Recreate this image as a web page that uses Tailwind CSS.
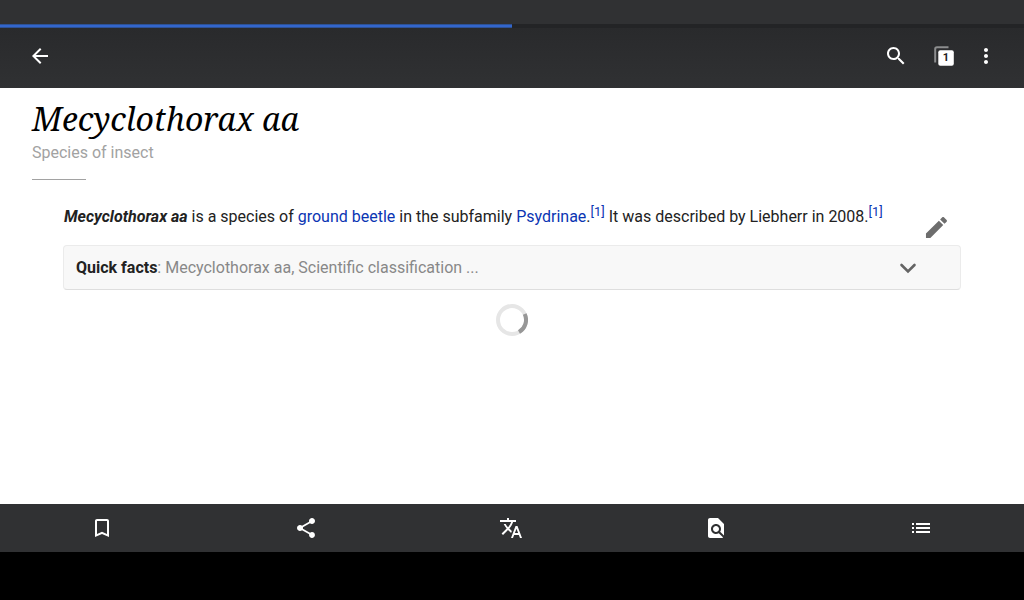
<!DOCTYPE html>
<html lang="en">
<head>
<meta charset="utf-8">
<meta name="viewport" content="width=device-width, initial-scale=1">
<title>Mecyclothorax aa</title>
<script src="https://cdn.jsdelivr.net/npm/@tailwindcss/browser@4"></script>
</head>
<body class="flex min-h-screen flex-col bg-black font-['Roboto',sans-serif] text-base text-[#222222]">
<header class="bg-[#303133] text-white">
  <div class="h-6"></div>
  <div role="progressbar" aria-label="Loading article" aria-valuenow="50" aria-valuemin="0" aria-valuemax="100" class="h-1 bg-[#232426]">
    <div class="h-full border-y border-[#2e5295] bg-[#3366cc]" style="width:50%"></div>
  </div>
  <div class="flex h-15 items-center bg-linear-to-b from-[#292a2c] to-[#303133] pr-[26px] pb-1 pl-7">
    <button type="button" aria-label="Back" class="mr-auto"><svg class="size-6" viewBox="0 0 24 24" fill="currentColor"><path d="M20 11H7.83l5.59-5.59L12 4l-8 8 8 8 1.41-1.41L7.83 13H20v-2z"/></svg></button>
    <button type="button" aria-label="Search" class="mr-6"><svg class="size-6" viewBox="0 0 24 24" fill="currentColor"><path d="M15.5 14h-.79l-.28-.27C15.41 12.59 16 11.11 16 9.5 16 5.91 13.09 3 9.5 3S3 5.91 3 9.5 5.91 16 9.5 16c1.61 0 3.09-.59 4.23-1.57l.27.28v.79l5 4.99L20.49 19l-4.99-5zm-6 0C7.01 14 5 11.99 5 9.5S7.01 5 9.5 5 14 7.01 14 9.5 11.99 14 9.5 14z"/></svg></button>
    <button type="button" aria-label="Tabs, 1 open" class="relative mr-[18px] size-6">
      <svg class="size-6" viewBox="0 0 24 24" fill="none"><path d="M3.200 18.500V5Q3.200 3.200 5 3.200H16.500" stroke="#8c8d8e" stroke-width="2"/><rect x="6.300" y="6.300" width="15.500" height="15.500" rx="2" fill="#fff"/></svg>
      <span class="absolute top-1.5 left-1.5 size-4 text-center text-[11px] leading-4 font-bold text-[#222222]">1</span>
    </button>
    <button type="button" aria-label="More options"><svg class="size-6" viewBox="0 0 24 24" fill="currentColor"><path d="M12 8c1.1 0 2-.9 2-2s-.9-2-2-2-2 .9-2 2 .9 2 2 2zm0 2c-1.1 0-2 .9-2 2s.9 2 2 2 2-.9 2-2-.9-2-2-2zm0 6c-1.1 0-2 .9-2 2s.9 2 2 2 2-.9 2-2-.9-2-2-2z"/></svg></button>
  </div>
</header>
<main class="flex-1 bg-white px-8 pt-2">
  <h1 class="font-['Noto_Serif','Liberation_Serif',serif] text-[32px] leading-[45px] text-black italic">Mecyclothorax aa</h1>
  <p class="leading-6 text-[#a2a2a2]">Species of insect</p>
  <hr class="mt-3.5 w-[54px] border-[#a2a2a2]">
  <div class="mt-[25px] flex px-8">
    <p class="flex-1 leading-6"><b class="italic">Mecyclothorax aa</b> is a species of <a href="#beetle" class="text-[#0b35b3]">ground beetle</a> in the subfamily <a href="#psydrinae" class="text-[#0b35b3]">Psydrinae</a>.<sup class="text-[13px]"><a href="#ref1" class="text-[#0b35b3]">[1]</a></sup> It was described by Liebherr in 2008.<sup class="text-[13px]"><a href="#ref1" class="text-[#0b35b3]">[1]</a></sup></p>
    <button type="button" aria-label="Edit" class="mt-2 mr-2.5 self-start text-[#6d6d6d]"><svg class="size-7" viewBox="0 0 24 24" fill="currentColor"><path d="M3.400 17.650V21.400h3.750L18.210 10.340l-3.750-3.750L3.400 17.650zM21.110 7.440c.39-.39.39-1.020 0-1.410l-2.340-2.340c-.39-.39-1.020-.39-1.410 0l-1.830 1.830 3.750 3.750 1.830-1.830z"/></svg></button>
  </div>
  <button type="button" id="facts" class="mx-[31px] mt-1 flex h-[45px] w-[calc(100%-62px)] items-center rounded-sm border border-[#ebebeb] border-b-[#dedede] bg-[#f8f8f8] pr-10 pl-3 text-left text-[#888888]">
    <span class="flex-1"><b class="text-[#222222]">Quick facts</b>: Mecyclothorax aa, Scientific classification ...</span>
    <svg class="size-6" viewBox="0 0 24 24" fill="none" stroke="#646464" stroke-width="2.600" stroke-linecap="round"><path d="m5.500 9 6.500 6.500L18.500 9"/></svg>
  </button>
  <svg role="img" aria-label="Loading" class="mx-auto mt-3.5 size-8" viewBox="0 0 32 32" fill="none" stroke-width="4"><circle cx="16" cy="16" r="14" stroke="#e6e6e6"/><path d="M28.700 10a14 14 0 0 1-5.700 18.100" stroke="#979797"/></svg>
</main>
<nav aria-label="Article tools" class="mb-12 grid h-12 grid-cols-5 bg-[#303133] text-white">
  <button type="button" aria-label="Save" class="flex items-center justify-center"><svg class="size-6" viewBox="0 0 24 24" fill="currentColor"><path d="M17 3H7c-1.100 0-1.990.9-1.990 2L5 21l7-3 7 3V5c0-1.100-.9-2-2-2zm0 15l-5-2.180L7 18V5h10v13z"/></svg></button>
  <button type="button" aria-label="Share" class="flex items-center justify-center pr-0.5"><svg class="size-6" viewBox="0 0 24 24" fill="currentColor"><path d="M18 16.080c-.76 0-1.440.3-1.960.77L8.910 12.700c.05-.23.09-.46.09-.7s-.04-.47-.09-.7l7.050-4.110c.54.5 1.250.81 2.040.81 1.660 0 3-1.340 3-3s-1.340-3-3-3-3 1.340-3 3c0 .24.04.47.09.7L8.040 9.810C7.500 9.310 6.790 9 6 9c-1.660 0-3 1.340-3 3s1.340 3 3 3c.79 0 1.500-.31 2.040-.81l7.120 4.160c-.05.21-.08.43-.08.65 0 1.610 1.310 2.920 2.920 2.920s2.920-1.310 2.920-2.920-1.310-2.920-2.920-2.920z"/></svg></button>
  <button type="button" aria-label="Language" class="flex items-center justify-center pr-0.5"><svg class="size-6" viewBox="0 0 24 24" fill="currentColor"><path d="M12.870 15.070l-2.540-2.510.03-.03c1.740-1.940 2.980-4.170 3.710-6.530H17V4h-7V2H8v2H1v1.990h11.170C11.500 7.920 10.440 9.750 9 11.350 8.070 10.320 7.300 9.190 6.690 8h-2c.73 1.630 1.730 3.170 2.980 4.560l-5.090 5.020L4 19l5-5 3.110 3.110.76-2.040zM18.500 10h-2L12 22h2l1.120-3h4.750L21 22h2l-4.500-12zm-2.620 7l1.620-4.330L19.120 17h-3.240z"/></svg></button>
  <button type="button" aria-label="Find in article" class="flex items-center justify-center pr-0.5"><svg class="size-6" viewBox="0 0 24 24" fill="currentColor"><path d="M20 19.590V8l-6-6H6c-1.100 0-1.990.9-1.990 2L4 20c0 1.100.89 2 1.990 2H18c.45 0 .85-.15 1.190-.4l-4.430-4.430c-.8.52-1.740.83-2.760.83-2.760 0-5-2.240-5-5s2.240-5 5-5 5 2.240 5 5c0 1.020-.31 1.960-.83 2.750L20 19.590zM9 13c0 1.660 1.340 3 3 3s3-1.340 3-3-1.340-3-3-3-3 1.340-3 3z"/></svg></button>
  <button type="button" aria-label="Contents" class="flex items-center justify-center pr-0.5"><svg class="size-6" viewBox="0 0 24 24" fill="currentColor"><path d="M3 13h2v-2H3v2zm0 4h2v-2H3v2zm0-8h2V7H3v2zm4 4h14v-2H7v2zm0 4h14v-2H7v2zM7 7v2h14V7H7z"/></svg></button>
</nav>
</body>
</html>
